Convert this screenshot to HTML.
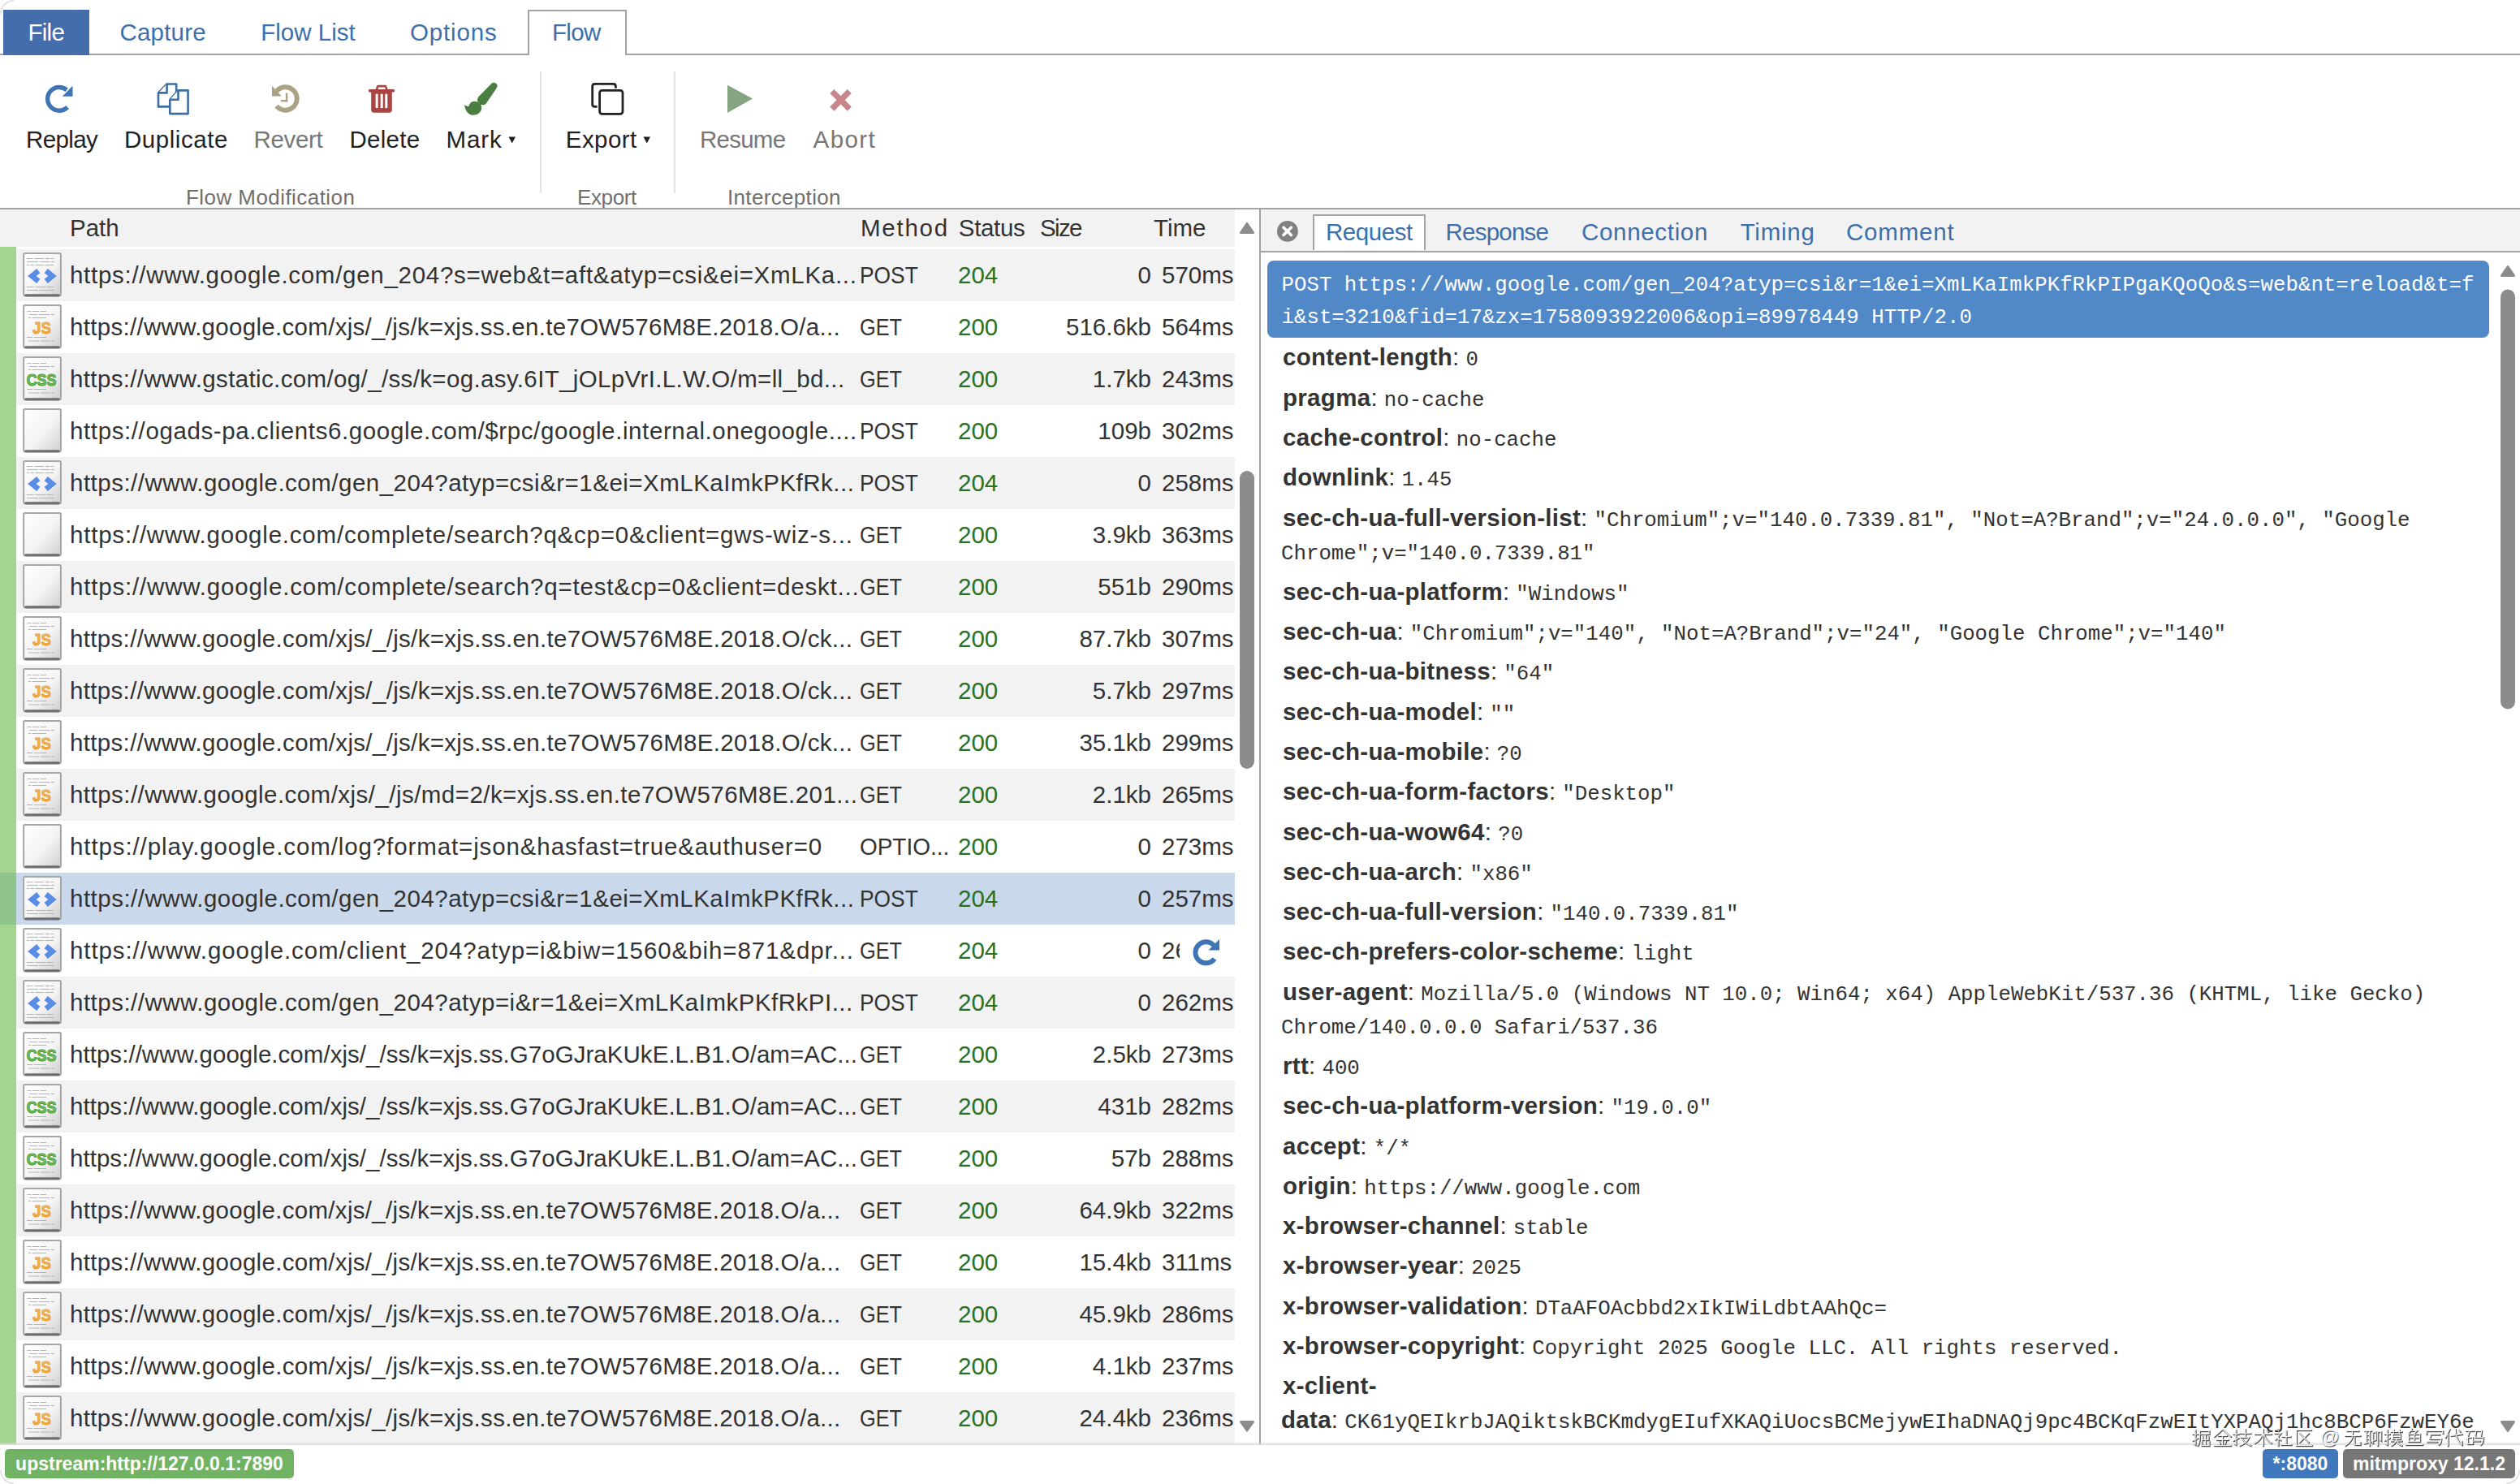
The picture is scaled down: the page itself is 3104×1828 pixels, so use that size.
<!DOCTYPE html>
<html><head><meta charset="utf-8"><title>mitmproxy</title><style>
*{box-sizing:border-box;margin:0;padding:0}
html,body{width:3104px;height:1828px;overflow:hidden;background:#fff;font-family:"Liberation Sans",sans-serif;color:#333;}
.a{position:absolute;white-space:nowrap}
.t{font-size:29.5px}
.m{font-family:"Liberation Mono",monospace;font-size:25.78px}
.menu{color:#3d6fab;font-size:29.5px;line-height:56px;top:12px}
.lbl{font-size:29.5px;line-height:40px;top:152px;color:#222}
.dis{color:#777}
.grp{font-size:26px;line-height:30px;top:227.6px;color:#6f6f6f}
.sep{position:absolute;top:88px;height:150px;width:2px;background:#e3e3e3}
.row{position:absolute;white-space:nowrap;left:0;width:1521px;height:64px;font-size:29.5px;line-height:64px;color:#333}
.row.odd{background:#f2f2f2}
.row.sel{background:#c9d8ea}
.row .g{position:absolute;left:0;top:0;width:20px;height:64px;background:#a3d490}
.row.sel .g{background:#8fc48d}
.row .ic{position:absolute;left:28px;top:4px;width:48px;height:56px}
.row .p{position:absolute;left:86px;width:970px;overflow:hidden;letter-spacing:0.9px}
.row .me{position:absolute;left:1059px;width:130px;overflow:hidden}
.row .st{position:absolute;left:1180px;color:#2a7020}
.row .sz{position:absolute;right:103px;text-align:right}
.row .tm{position:absolute;left:1431px;width:88px;overflow:hidden}
.hdr{font-size:29.5px;line-height:46px;top:258px;color:#333}
.dtab{font-size:29.5px;line-height:46px;top:262.5px;color:#3d6fab}
.kv{position:absolute;left:1580px;font-size:29.5px;color:#333;white-space:nowrap}
.kv b{font-weight:bold;letter-spacing:0.3px}
.kv .m{color:#333}
.badge{position:absolute;top:1785px;height:36px;border-radius:5px;color:#fff;font-weight:bold;font-size:23px;line-height:36px;text-align:center}
</style></head><body>
<div class="a" style="left:0;top:66px;width:3104px;height:2px;background:#a3a3a3"></div>
<div class="a" style="left:4px;top:12px;width:106px;height:56px;background:#446eab;color:#fff;font-size:29.5px;line-height:56px;text-align:center;letter-spacing:-0.71px;text-indent:-0.5px">File</div>
<div class="a menu" style="left:147.4px;letter-spacing:0.23px">Capture</div>
<div class="a menu" style="left:321.3px">Flow List</div>
<div class="a menu" style="left:505px;letter-spacing:0.85px">Options</div>
<div class="a" style="left:650px;top:12px;width:122px;height:56px;border:2px solid #a3a3a3;border-bottom:none;background:#fff"></div>
<div class="a menu" style="left:680px;letter-spacing:-0.66px">Flow</div>

<svg class="a" style="left:0;top:0" width="1100" height="258" viewBox="0 0 1100 258">
 <!-- replay -->
 <path d="M82.17 110.86 A14.35 14.35 0 1 0 83.1 132.0" fill="none" stroke="#3f74b5" stroke-width="5.4"/>
 <path d="M89.5 105.8 L89.5 118.7 L76.8 118.7 Z" fill="#3f74b5"/>
 <!-- duplicate -->
 <g fill="#fff" stroke="#3e6e9c" stroke-width="2.6" stroke-linejoin="round">
  <path d="M195 114.4 L205.6 103.5 L217.2 103.5 L217.2 131.4 L195 131.4 Z"/>
  <path d="M195 114.4 L205.6 114.4 L205.6 103.5"/>
  <path d="M209.3 122.8 L219.5 111.4 L231.6 111.4 L231.6 140.1 L209.3 140.1 Z"/>
  <path d="M209.3 122.8 L219.5 122.8 L219.5 111.4"/>
 </g>
 <!-- revert (history) -->
 <path d="M340.6 112.3 A14.25 14.25 0 1 1 340.6 130.7" fill="none" stroke="#aba283" stroke-width="5.9"/>
 <path d="M335 105.8 L335 118.6 L347 118.6 Z" fill="#aba283"/>
 <rect x="351.9" y="114.6" width="2.4" height="10.8" fill="#aba283"/><rect x="345.9" y="123" width="8.4" height="2.4" fill="#aba283"/>
 <!-- delete (trash) -->
 <g fill="#a94442">
  <path d="M462.6 110.6 L464 106 Q464.5 104.7 466 104.7 L474.3 104.7 Q475.8 104.7 476.3 106 L477.7 110.6 L474.9 110.6 L474.2 107.6 L466.1 107.6 L465.4 110.6 Z"/>
  <rect x="454" y="110.1" width="32" height="3.3" rx="1.2"/>
  <path d="M457.2 113 L482.8 113 L482.8 135.3 Q482.8 138.7 479.4 138.7 L460.6 138.7 Q457.2 138.7 457.2 135.3 Z"/>
 </g>
 <g fill="#fff"><rect x="462.6" y="115.7" width="3" height="17.4"/><rect x="468.7" y="115.7" width="3" height="17.4"/><rect x="474.3" y="115.7" width="3" height="17.4"/></g>
 <!-- mark (paint brush) -->
 <g fill="#4b7f41">
  <path d="M605.3 103.1 A4.2 4.2 0 0 1 611.7 108.5 L598.8 127.4 A6.2 6.2 0 0 1 589.2 119.6 Z"/>
  <path d="M572 128.9 C573 137 577.5 141.8 583 141.8 C589 141.8 593.2 137.5 593.2 132.8 C593.2 128 589 124.8 584.5 124.8 C580 124.8 578 128 577.5 131 C576 131 573.5 130.2 572 128.9 Z"/>
 </g>
 <path d="M626.5 168.5 L635 168.5 L630.75 176.5 Z" fill="#222"/>
 <!-- export (clone) -->
 <g fill="none" stroke="#222" stroke-width="2.8">
  <path d="M735.6 131.4 L732.7 131.4 Q729.7 131.4 729.7 128.4 L729.7 106.4 Q729.7 103.4 732.7 103.4 L755.4 103.4 Q758.4 103.4 758.4 106.4 L758.4 108.7"/>
  <rect x="738.6" y="111.4" width="28.4" height="28.9" rx="3"/>
 </g>
 <path d="M792.5 168.5 L801 168.5 L796.75 176.5 Z" fill="#222"/>
 <!-- resume -->
 <path d="M896 104.7 L927 121.6 L896 138.9 Z" fill="#85a582"/>
 <!-- abort -->
 <g stroke="#c6868c" stroke-width="7.2" stroke-linecap="butt">
  <path d="M1024.8 112.5 L1046.3 134.1 M1046.3 112.5 L1024.8 134.1"/>
 </g>
</svg>
<div class="a lbl" style="left:32px;letter-spacing:-0.62px">Replay</div>
<div class="a lbl" style="left:153px;letter-spacing:0.55px">Duplicate</div>
<div class="a lbl dis" style="left:312.6px;letter-spacing:-0.34px">Revert</div>
<div class="a lbl" style="left:430.5px;letter-spacing:0.27px">Delete</div>
<div class="a lbl" style="left:549.6px;letter-spacing:0.87px">Mark</div>
<div class="a lbl" style="left:696.8px;letter-spacing:0.43px">Export</div>
<div class="a lbl dis" style="left:862px;letter-spacing:-0.75px">Resume</div>
<div class="a lbl dis" style="left:1001.5px;letter-spacing:1.45px">Abort</div>
<div class="a grp" style="left:229px;letter-spacing:0.44px">Flow Modification</div>
<div class="a grp" style="left:711px;letter-spacing:-0.38px">Export</div>
<div class="a grp" style="left:896px;letter-spacing:0.33px">Interception</div>
<div class="sep" style="left:665px"></div>
<div class="sep" style="left:830px"></div>
<div class="a" style="left:0;top:256px;width:3104px;height:2px;background:#a3a3a3"></div>
<div class="a" style="left:0;top:258px;width:1521px;height:46px;background:#f2f2f2"></div>
<div class="a hdr" style="left:86px">Path</div>
<div class="a hdr" style="left:1060px;letter-spacing:1.74px">Method</div>
<div class="a hdr" style="left:1180.8px;letter-spacing:-0.34px">Status</div>
<div class="a hdr" style="left:1281px;letter-spacing:-1.66px">Size</div>
<div class="a hdr" style="left:1421px">Time</div>

<svg width="0" height="0" style="position:absolute">
 <defs>
  <linearGradient id="dg" x1="0" y1="0" x2="1" y2="1">
   <stop offset="0" stop-color="#ffffff"/><stop offset="0.55" stop-color="#f4f4f4"/><stop offset="1" stop-color="#cfcfcf"/>
  </linearGradient>
  <linearGradient id="jsg" x1="0" y1="0" x2="0" y2="1"><stop offset="0" stop-color="#f7c46a"/><stop offset="1" stop-color="#eea43a"/></linearGradient>
  <g id="doc">
   <rect x="1.1" y="1.1" width="45.8" height="51.8" rx="1.5" fill="url(#dg)" stroke="#a6a6a6" stroke-width="2"/>
   <rect x="2.2" y="51.2" width="43.6" height="3.4" rx="1.5" fill="#6e6e6e"/>
  </g>
  <g id="lines" fill="none" stroke="#b4b4b4" stroke-width="1.1">
   <path d="M5 8.5H10M11.5 8.5H20M21.5 8.5H29" /><path d="M8 12.5H18M19.5 12.5H33M34.5 12.5H39"/><path d="M7 16.5H10M11.5 16.5H29"/>
   <path d="M5 40.5H12M13.5 40.5H29"/><path d="M7 45H20M21.5 45H33M34.5 45H39"/>
  </g>
  <g id="i-html"><use href="#doc"/>
   <g fill="none" stroke="#b4b4b4" stroke-width="1.1"><path d="M5 7.5H12M13.5 7.5H26M27.5 7.5H33M34.5 7.5H38"/><path d="M5 11.5H19M20.5 11.5H33M34.5 11.5H39"/><path d="M5 15.5H8M9.5 15.5H14M15.5 15.5H26M27.5 15.5H38"/><path d="M5 42.5H14M15.5 42.5H28M29.5 42.5H38"/><path d="M5 46.5H19M20.5 46.5H38"/></g>
   <path d="M19.3 22.6 L11.4 29 L19.3 35.4" fill="none" stroke="#5b8de6" stroke-width="6.6" stroke-linecap="butt" stroke-linejoin="miter" stroke-miterlimit="8"/>
   <path d="M28.7 22.6 L36.6 29 L28.7 35.4" fill="none" stroke="#5b8de6" stroke-width="6.6" stroke-linecap="butt" stroke-linejoin="miter" stroke-miterlimit="8"/>
  </g>
  <g id="i-js"><use href="#doc"/><use href="#lines"/>
   <text x="23.5" y="36" text-anchor="middle" font-family="Liberation Sans" font-weight="bold" font-size="21" fill="url(#jsg)" stroke="#e9a03c" stroke-width="0.9" textLength="23" lengthAdjust="spacingAndGlyphs">JS</text>
  </g>
  <g id="i-css"><use href="#doc"/><use href="#lines"/>
   <text x="23" y="36" text-anchor="middle" font-family="Liberation Sans" font-weight="bold" font-size="19.5" fill="#7cc262" stroke="#4f9e38" stroke-width="1.1" textLength="36.4" lengthAdjust="spacingAndGlyphs">CSS</text>
  </g>
  <g id="i-blank"><use href="#doc"/></g>
 </defs>
</svg>
<div class="row odd" style="top:307px"><div class="g"></div><svg class="ic" viewBox="0 0 48 56"><use href="#i-html"/></svg><div class="p" style="letter-spacing:0.71px">https://www.google.com/gen_204?s=web&amp;t=aft&amp;atyp=csi&amp;ei=XmLKa...</div><div class="me" style="transform:scaleX(0.894);transform-origin:0 0">POST</div><div class="st">204</div><div class="sz">0</div><div class="tm">570ms</div></div>
<div class="row" style="top:371px"><div class="g"></div><svg class="ic" viewBox="0 0 48 56"><use href="#i-js"/></svg><div class="p" style="letter-spacing:0.3px">https://www.google.com/xjs/_/js/k=xjs.ss.en.te7OW576M8E.2018.O/a...</div><div class="me" style="transform:scaleX(0.856);transform-origin:0 0">GET</div><div class="st">200</div><div class="sz">516.6kb</div><div class="tm">564ms</div></div>
<div class="row odd" style="top:435px"><div class="g"></div><svg class="ic" viewBox="0 0 48 56"><use href="#i-css"/></svg><div class="p" style="letter-spacing:0.36px">https://www.gstatic.com/og/_/ss/k=og.asy.6IT_jOLpVrI.L.W.O/m=ll_bd...</div><div class="me" style="transform:scaleX(0.856);transform-origin:0 0">GET</div><div class="st">200</div><div class="sz">1.7kb</div><div class="tm">243ms</div></div>
<div class="row" style="top:499px"><div class="g"></div><svg class="ic" viewBox="0 0 48 56"><use href="#i-blank"/></svg><div class="p" style="letter-spacing:0.61px">https://ogads-pa.clients6.google.com/$rpc/google.internal.onegoogle....</div><div class="me" style="transform:scaleX(0.894);transform-origin:0 0">POST</div><div class="st">200</div><div class="sz">109b</div><div class="tm">302ms</div></div>
<div class="row odd" style="top:563px"><div class="g"></div><svg class="ic" viewBox="0 0 48 56"><use href="#i-html"/></svg><div class="p" style="letter-spacing:0.49px">https://www.google.com/gen_204?atyp=csi&amp;r=1&amp;ei=XmLKaImkPKfRk...</div><div class="me" style="transform:scaleX(0.894);transform-origin:0 0">POST</div><div class="st">204</div><div class="sz">0</div><div class="tm">258ms</div></div>
<div class="row" style="top:627px"><div class="g"></div><svg class="ic" viewBox="0 0 48 56"><use href="#i-blank"/></svg><div class="p" style="letter-spacing:0.79px">https://www.google.com/complete/search?q&amp;cp=0&amp;client=gws-wiz-s...</div><div class="me" style="transform:scaleX(0.856);transform-origin:0 0">GET</div><div class="st">200</div><div class="sz">3.9kb</div><div class="tm">363ms</div></div>
<div class="row odd" style="top:691px"><div class="g"></div><svg class="ic" viewBox="0 0 48 56"><use href="#i-blank"/></svg><div class="p" style="letter-spacing:0.81px">https://www.google.com/complete/search?q=test&amp;cp=0&amp;client=deskt...</div><div class="me" style="transform:scaleX(0.856);transform-origin:0 0">GET</div><div class="st">200</div><div class="sz">551b</div><div class="tm">290ms</div></div>
<div class="row" style="top:755px"><div class="g"></div><svg class="ic" viewBox="0 0 48 56"><use href="#i-js"/></svg><div class="p" style="letter-spacing:0.33px">https://www.google.com/xjs/_/js/k=xjs.ss.en.te7OW576M8E.2018.O/ck...</div><div class="me" style="transform:scaleX(0.856);transform-origin:0 0">GET</div><div class="st">200</div><div class="sz">87.7kb</div><div class="tm">307ms</div></div>
<div class="row odd" style="top:819px"><div class="g"></div><svg class="ic" viewBox="0 0 48 56"><use href="#i-js"/></svg><div class="p" style="letter-spacing:0.33px">https://www.google.com/xjs/_/js/k=xjs.ss.en.te7OW576M8E.2018.O/ck...</div><div class="me" style="transform:scaleX(0.856);transform-origin:0 0">GET</div><div class="st">200</div><div class="sz">5.7kb</div><div class="tm">297ms</div></div>
<div class="row" style="top:883px"><div class="g"></div><svg class="ic" viewBox="0 0 48 56"><use href="#i-js"/></svg><div class="p" style="letter-spacing:0.33px">https://www.google.com/xjs/_/js/k=xjs.ss.en.te7OW576M8E.2018.O/ck...</div><div class="me" style="transform:scaleX(0.856);transform-origin:0 0">GET</div><div class="st">200</div><div class="sz">35.1kb</div><div class="tm">299ms</div></div>
<div class="row odd" style="top:947px"><div class="g"></div><svg class="ic" viewBox="0 0 48 56"><use href="#i-js"/></svg><div class="p" style="letter-spacing:0.46px">https://www.google.com/xjs/_/js/md=2/k=xjs.ss.en.te7OW576M8E.201...</div><div class="me" style="transform:scaleX(0.856);transform-origin:0 0">GET</div><div class="st">200</div><div class="sz">2.1kb</div><div class="tm">265ms</div></div>
<div class="row" style="top:1011px"><div class="g"></div><svg class="ic" viewBox="0 0 48 56"><use href="#i-blank"/></svg><div class="p" style="letter-spacing:0.89px">https://play.google.com/log?format=json&amp;hasfast=true&amp;authuser=0</div><div class="me" style="transform:scaleX(0.947);transform-origin:0 0">OPTIO...</div><div class="st">200</div><div class="sz">0</div><div class="tm">273ms</div></div>
<div class="row sel" style="top:1075px"><div class="g"></div><svg class="ic" viewBox="0 0 48 56"><use href="#i-html"/></svg><div class="p" style="letter-spacing:0.49px">https://www.google.com/gen_204?atyp=csi&amp;r=1&amp;ei=XmLKaImkPKfRk...</div><div class="me" style="transform:scaleX(0.894);transform-origin:0 0">POST</div><div class="st">204</div><div class="sz">0</div><div class="tm">257ms</div></div>
<div class="row" style="top:1139px"><div class="g"></div><svg class="ic" viewBox="0 0 48 56"><use href="#i-html"/></svg><div class="p" style="letter-spacing:0.91px">https://www.google.com/client_204?atyp=i&amp;biw=1560&amp;bih=871&amp;dpr...</div><div class="me" style="transform:scaleX(0.856);transform-origin:0 0">GET</div><div class="st">204</div><div class="sz">0</div><div class="tm" style="width:22px">26</div><svg class="a" style="left:1467px;top:16px" width="36" height="36" viewBox="0 0 36 36"><path d="M28 9.5 A13 13 0 1 0 29 26" fill="none" stroke="#3f74b5" stroke-width="6"/><path d="M35 2 L35 15.5 L21.5 15.5 Z" fill="#3f74b5"/></svg></div>
<div class="row odd" style="top:1203px"><div class="g"></div><svg class="ic" viewBox="0 0 48 56"><use href="#i-html"/></svg><div class="p" style="letter-spacing:0.49px">https://www.google.com/gen_204?atyp=i&amp;r=1&amp;ei=XmLKaImkPKfRkPI...</div><div class="me" style="transform:scaleX(0.894);transform-origin:0 0">POST</div><div class="st">204</div><div class="sz">0</div><div class="tm">262ms</div></div>
<div class="row" style="top:1267px"><div class="g"></div><svg class="ic" viewBox="0 0 48 56"><use href="#i-css"/></svg><div class="p" style="letter-spacing:0.04px">https://www.google.com/xjs/_/ss/k=xjs.ss.G7oGJraKUkE.L.B1.O/am=AC...</div><div class="me" style="transform:scaleX(0.856);transform-origin:0 0">GET</div><div class="st">200</div><div class="sz">2.5kb</div><div class="tm">273ms</div></div>
<div class="row odd" style="top:1331px"><div class="g"></div><svg class="ic" viewBox="0 0 48 56"><use href="#i-css"/></svg><div class="p" style="letter-spacing:0.04px">https://www.google.com/xjs/_/ss/k=xjs.ss.G7oGJraKUkE.L.B1.O/am=AC...</div><div class="me" style="transform:scaleX(0.856);transform-origin:0 0">GET</div><div class="st">200</div><div class="sz">431b</div><div class="tm">282ms</div></div>
<div class="row" style="top:1395px"><div class="g"></div><svg class="ic" viewBox="0 0 48 56"><use href="#i-css"/></svg><div class="p" style="letter-spacing:0.04px">https://www.google.com/xjs/_/ss/k=xjs.ss.G7oGJraKUkE.L.B1.O/am=AC...</div><div class="me" style="transform:scaleX(0.856);transform-origin:0 0">GET</div><div class="st">200</div><div class="sz">57b</div><div class="tm">288ms</div></div>
<div class="row odd" style="top:1459px"><div class="g"></div><svg class="ic" viewBox="0 0 48 56"><use href="#i-js"/></svg><div class="p" style="letter-spacing:0.31px">https://www.google.com/xjs/_/js/k=xjs.ss.en.te7OW576M8E.2018.O/a...</div><div class="me" style="transform:scaleX(0.856);transform-origin:0 0">GET</div><div class="st">200</div><div class="sz">64.9kb</div><div class="tm">322ms</div></div>
<div class="row" style="top:1523px"><div class="g"></div><svg class="ic" viewBox="0 0 48 56"><use href="#i-js"/></svg><div class="p" style="letter-spacing:0.31px">https://www.google.com/xjs/_/js/k=xjs.ss.en.te7OW576M8E.2018.O/a...</div><div class="me" style="transform:scaleX(0.856);transform-origin:0 0">GET</div><div class="st">200</div><div class="sz">15.4kb</div><div class="tm">311ms</div></div>
<div class="row odd" style="top:1587px"><div class="g"></div><svg class="ic" viewBox="0 0 48 56"><use href="#i-js"/></svg><div class="p" style="letter-spacing:0.31px">https://www.google.com/xjs/_/js/k=xjs.ss.en.te7OW576M8E.2018.O/a...</div><div class="me" style="transform:scaleX(0.856);transform-origin:0 0">GET</div><div class="st">200</div><div class="sz">45.9kb</div><div class="tm">286ms</div></div>
<div class="row" style="top:1651px"><div class="g"></div><svg class="ic" viewBox="0 0 48 56"><use href="#i-js"/></svg><div class="p" style="letter-spacing:0.31px">https://www.google.com/xjs/_/js/k=xjs.ss.en.te7OW576M8E.2018.O/a...</div><div class="me" style="transform:scaleX(0.856);transform-origin:0 0">GET</div><div class="st">200</div><div class="sz">4.1kb</div><div class="tm">237ms</div></div>
<div class="row odd" style="top:1715px"><div class="g"></div><svg class="ic" viewBox="0 0 48 56"><use href="#i-js"/></svg><div class="p" style="letter-spacing:0.31px">https://www.google.com/xjs/_/js/k=xjs.ss.en.te7OW576M8E.2018.O/a...</div><div class="me" style="transform:scaleX(0.856);transform-origin:0 0">GET</div><div class="st">200</div><div class="sz">24.4kb</div><div class="tm">236ms</div></div>
<div class="a" style="left:0;top:304px;width:20px;height:3px;background:#a3d490"></div>
<svg class="a" style="left:1521px;top:258px" width="30" height="1522" viewBox="0 0 30 1522"><path d="M7.5 28.5 L22.5 28.5 L15 17.5 Z" fill="#8c8c8c" stroke="#8c8c8c" stroke-width="3" stroke-linejoin="round"/><rect x="6" y="322" width="18" height="367" rx="9" fill="#8c8c8c"/><path d="M7.5 1493.5 L22.5 1493.5 L15 1504 Z" fill="#8c8c8c" stroke="#8c8c8c" stroke-width="3" stroke-linejoin="round"/></svg>
<div class="a" style="left:1551px;top:258px;width:2px;height:1522px;background:#a3a3a3"></div>
<div class="a" style="left:1553px;top:258px;width:1551px;height:51px;background:#f2f2f2"></div>
<svg class="a" style="left:1572px;top:271px" width="28" height="28" viewBox="0 0 28 28"><circle cx="13.9" cy="13.9" r="12.9" fill="#808080"/><path d="M9 9.2 L18.4 18.6 M18.4 9.2 L9 18.6" stroke="#fff" stroke-width="3.6" stroke-linecap="round"/></svg>
<div class="a" style="left:1617px;top:264px;width:139px;height:44px;border:2px solid #a3a3a3;border-bottom:none;background:#fff"></div>
<div class="a" style="left:1553px;top:309px;width:1551px;height:2px;background:#a3a3a3"></div>
<div class="a dtab" style="left:1633px;letter-spacing:-0.45px">Request</div>
<div class="a dtab" style="left:1780.5px;letter-spacing:-0.76px">Response</div>
<div class="a dtab" style="left:1948px;letter-spacing:0.68px">Connection</div>
<div class="a dtab" style="left:2143.7px;letter-spacing:0.76px">Timing</div>
<div class="a dtab" style="left:2274px;letter-spacing:0.8px">Comment</div>
<div class="a" style="left:1561px;top:321px;width:1505px;height:95px;border-radius:8px;background:#5088c8"></div>
<div class="a m" style="left:1578.5px;top:332.2px;color:#fff;line-height:39.4px">POST https://www.google.com/gen_204?atyp=csi&amp;r=1&amp;ei=XmLKaImkPKfRkPIPgaKQoQo&amp;s=web&amp;nt=reload&amp;t=f<br>i&amp;st=3210&amp;fid=17&amp;zx=1758093922006&amp;opi=89978449 HTTP/2.0</div>
<div class="kv" style="top:419.3px;line-height:41.9px"><b>content-length</b>: <span class="m">0</span></div>
<div class="kv" style="top:468.6px;line-height:41.9px"><b>pragma</b>: <span class="m">no-cache</span></div>
<div class="kv" style="top:517.9px;line-height:41.9px"><b>cache-control</b>: <span class="m">no-cache</span></div>
<div class="kv" style="top:567.2px;line-height:41.9px"><b>downlink</b>: <span class="m">1.45</span></div>
<div class="kv" style="top:616.5px;line-height:41.9px"><b>sec-ch-ua-full-version-list</b>: <span class="m">"Chromium";v="140.0.7339.81", "Not=A?Brand";v="24.0.0.0", "Google</span></div>
<div class="kv m" style="top:661.8px;line-height:41.9px;left:1578px;font-size:25.78px">Chrome";v="140.0.7339.81"</div>
<div class="kv" style="top:707.7px;line-height:41.9px"><b>sec-ch-ua-platform</b>: <span class="m">"Windows"</span></div>
<div class="kv" style="top:757.0px;line-height:41.9px"><b>sec-ch-ua</b>: <span class="m">"Chromium";v="140", "Not=A?Brand";v="24", "Google Chrome";v="140"</span></div>
<div class="kv" style="top:806.3px;line-height:41.9px"><b>sec-ch-ua-bitness</b>: <span class="m">"64"</span></div>
<div class="kv" style="top:855.6px;line-height:41.9px"><b>sec-ch-ua-model</b>: <span class="m">""</span></div>
<div class="kv" style="top:904.9px;line-height:41.9px"><b>sec-ch-ua-mobile</b>: <span class="m">?0</span></div>
<div class="kv" style="top:954.2px;line-height:41.9px"><b>sec-ch-ua-form-factors</b>: <span class="m">"Desktop"</span></div>
<div class="kv" style="top:1003.5px;line-height:41.9px"><b>sec-ch-ua-wow64</b>: <span class="m">?0</span></div>
<div class="kv" style="top:1052.8px;line-height:41.9px"><b>sec-ch-ua-arch</b>: <span class="m">"x86"</span></div>
<div class="kv" style="top:1102.1px;line-height:41.9px"><b>sec-ch-ua-full-version</b>: <span class="m">"140.0.7339.81"</span></div>
<div class="kv" style="top:1151.4px;line-height:41.9px"><b>sec-ch-prefers-color-scheme</b>: <span class="m">light</span></div>
<div class="kv" style="top:1200.7px;line-height:41.9px"><b>user-agent</b>: <span class="m">Mozilla/5.0 (Windows NT 10.0; Win64; x64) AppleWebKit/537.36 (KHTML, like Gecko)</span></div>
<div class="kv m" style="top:1246.0px;line-height:41.9px;left:1578px;font-size:25.78px">Chrome/140.0.0.0 Safari/537.36</div>
<div class="kv" style="top:1291.9px;line-height:41.9px"><b>rtt</b>: <span class="m">400</span></div>
<div class="kv" style="top:1341.2px;line-height:41.9px"><b>sec-ch-ua-platform-version</b>: <span class="m">"19.0.0"</span></div>
<div class="kv" style="top:1390.5px;line-height:41.9px"><b>accept</b>: <span class="m">*/*</span></div>
<div class="kv" style="top:1439.8px;line-height:41.9px"><b>origin</b>: <span class="m">https://www.google.com</span></div>
<div class="kv" style="top:1489.1px;line-height:41.9px"><b>x-browser-channel</b>: <span class="m">stable</span></div>
<div class="kv" style="top:1538.4px;line-height:41.9px"><b>x-browser-year</b>: <span class="m">2025</span></div>
<div class="kv" style="top:1587.7px;line-height:41.9px"><b>x-browser-validation</b>: <span class="m">DTaAFOAcbbd2xIkIWiLdbtAAhQc=</span></div>
<div class="kv" style="top:1637.0px;line-height:41.9px"><b>x-browser-copyright</b>: <span class="m">Copyright 2025 Google LLC. All rights reserved.</span></div>
<div class="kv" style="top:1686.3px;line-height:41.9px"><b>x-client-</b></div>
<div class="kv" style="top:1728.2px;line-height:41.9px;left:1578px"><b>data</b>: <span class="m">CK61yQEIkrbJAQiktskBCKmdygEIufXKAQiUocsBCMejywEIhaDNAQj9pc4BCKqFzwEItYXPAQj1hc8BCP6FzwEY6e</span></div>
<svg class="a" style="left:3074px;top:311px" width="30" height="1469" viewBox="0 0 30 1469"><path d="M7.5 28.5 L22.5 28.5 L15 17.5 Z" fill="#8c8c8c" stroke="#8c8c8c" stroke-width="3" stroke-linejoin="round"/><rect x="6" y="45.5" width="18" height="517" rx="9" fill="#8c8c8c"/><path d="M7.5 1440.5 L22.5 1440.5 L15 1451.5 Z" fill="#8c8c8c" stroke="#8c8c8c" stroke-width="3" stroke-linejoin="round"/></svg>
<div class="a" style="left:0;top:1776px;width:3104px;height:4px;background:linear-gradient(#ffffff00,#d9d9d9)"></div>
<div class="a" style="left:0;top:1780px;width:3104px;height:48px;background:#fff"></div>
<div class="badge" style="left:6px;width:356px;background:#70b463">upstream:http://127.0.0.1:7890</div>
<div class="badge" style="left:2787px;width:93px;background:#3f78bd">*:8080</div>
<div class="badge" style="left:2886px;width:212px;background:#777">mitmproxy 12.1.2</div>
<svg class="a" style="left:2695px;top:1755px" width="380" height="32" viewBox="2695 1755 380 32"><g fill="none" stroke="#4d4d4d" stroke-width="2" stroke-linecap="square"><path transform="translate(2701.7 1760.2)" d="M0 7L6 7M3 2L3 20L1.5 19M0 15L6 12M8 3L20 3L20 7L9 7M8.5 3L8.2 14Q7.5 19 6 21M12 10L12 14L19 14L19 10M15.5 8.5L15.5 20M11 16L11 21L20 21L20 16"/><path transform="translate(2727.2 1760.2)" d="M11 1L1 10M11 1L21 10M6 9L16 9M4 14L18 14M11 9L11 21M7 16L8 19M15 16L14 19M1 21L21 21"/><path transform="translate(2751.7 1760.2)" d="M0 7L6 7M3 2L3 20L1.5 19M0 15L6 12M8 6L21 6M14.5 1L14.5 10M9 11L19 11Q16 18 8 21M11 13Q15 19 21 21"/><path transform="translate(2777.2 1760.2)" d="M1 7L21 7M11 1L11 21M10 8Q7 15 1 18M12 8Q15 15 21 18M15.5 2L17 4"/><path transform="translate(2801.7 1760.2)" d="M4 1L5.5 3M1 6L8 6L2 14M5 10L5 21M5 12L8 14.5M10 10L20 10M15 3L15 20M9 20L21 20"/><path transform="translate(2827.2 1760.2)" d="M20 2L2 2L2 21L21 21M6 6L17 17M17 6L6 17"/><path transform="translate(2887.7 1760.2)" d="M4 3L18 3M2 9L20 9M10.5 3.5L10.5 10Q9 16 2 21M13 9L13 18Q13 20 15 20L20 20L20 17"/><path transform="translate(2912.3999999999996 1760.2)" d="M1 3L9 3M3 3L3 18M7 3L7 21M3 8L7 8M3 13L7 13M1 18.5L9 16.5M11 5L15 4L15 14L11 15M11 4.5L11 18M17 4L21 4L21 15L19.5 14M17 4L17 21"/><path transform="translate(2938.0 1760.2)" d="M0 7L6 7M3 2L3 20L1.5 19M0 15L6 12M8 4L21 4M11 2L11 6M18 2L18 6M10 7L19 7L19 13L10 13Z M10 10L19 10M8 15.5L21 15.5M14.5 13.5Q13 19 8.5 21M15 16Q17 20 21 21"/><path transform="translate(2963.2999999999997 1760.2)" d="M8 1L4 6M7 3L14 3L11 6M4 7L18 7L18 16L4 16Z M11 7L11 16M4 11.5L18 11.5M1 20L21 20"/><path transform="translate(2988.5 1760.2)" d="M1 7L1 3L21 3L21 6M6 7.5L17 7.5M6 7.5L5 13M5 13L19 13Q19 18 16 20M2 16.5L14 16.5"/><path transform="translate(3011.8999999999996 1760.2)" d="M6 1L1 11M4 7L4 21M8 9L21 7M13 1Q13.5 14 21 20L21 16M17 2L19 4"/><path transform="translate(3038.2999999999997 1760.2)" d="M0 3L8 3M4 3L1 13M2 11L8 11L8 19L2 19Z M10 3L19 3L18 10M12 3L11 11M11 11L21 11Q21 18 18 20M9 15.5L17 15.5"/></g><g fill="none" stroke="#f2f2f2" stroke-width="1.2" stroke-linecap="square"><path transform="translate(2701 1759.5)" d="M0 7L6 7M3 2L3 20L1.5 19M0 15L6 12M8 3L20 3L20 7L9 7M8.5 3L8.2 14Q7.5 19 6 21M12 10L12 14L19 14L19 10M15.5 8.5L15.5 20M11 16L11 21L20 21L20 16"/><path transform="translate(2726.5 1759.5)" d="M11 1L1 10M11 1L21 10M6 9L16 9M4 14L18 14M11 9L11 21M7 16L8 19M15 16L14 19M1 21L21 21"/><path transform="translate(2751 1759.5)" d="M0 7L6 7M3 2L3 20L1.5 19M0 15L6 12M8 6L21 6M14.5 1L14.5 10M9 11L19 11Q16 18 8 21M11 13Q15 19 21 21"/><path transform="translate(2776.5 1759.5)" d="M1 7L21 7M11 1L11 21M10 8Q7 15 1 18M12 8Q15 15 21 18M15.5 2L17 4"/><path transform="translate(2801 1759.5)" d="M4 1L5.5 3M1 6L8 6L2 14M5 10L5 21M5 12L8 14.5M10 10L20 10M15 3L15 20M9 20L21 20"/><path transform="translate(2826.5 1759.5)" d="M20 2L2 2L2 21L21 21M6 6L17 17M17 6L6 17"/><path transform="translate(2887 1759.5)" d="M4 3L18 3M2 9L20 9M10.5 3.5L10.5 10Q9 16 2 21M13 9L13 18Q13 20 15 20L20 20L20 17"/><path transform="translate(2911.7 1759.5)" d="M1 3L9 3M3 3L3 18M7 3L7 21M3 8L7 8M3 13L7 13M1 18.5L9 16.5M11 5L15 4L15 14L11 15M11 4.5L11 18M17 4L21 4L21 15L19.5 14M17 4L17 21"/><path transform="translate(2937.3 1759.5)" d="M0 7L6 7M3 2L3 20L1.5 19M0 15L6 12M8 4L21 4M11 2L11 6M18 2L18 6M10 7L19 7L19 13L10 13Z M10 10L19 10M8 15.5L21 15.5M14.5 13.5Q13 19 8.5 21M15 16Q17 20 21 21"/><path transform="translate(2962.6 1759.5)" d="M8 1L4 6M7 3L14 3L11 6M4 7L18 7L18 16L4 16Z M11 7L11 16M4 11.5L18 11.5M1 20L21 20"/><path transform="translate(2987.8 1759.5)" d="M1 7L1 3L21 3L21 6M6 7.5L17 7.5M6 7.5L5 13M5 13L19 13Q19 18 16 20M2 16.5L14 16.5"/><path transform="translate(3011.2 1759.5)" d="M6 1L1 11M4 7L4 21M8 9L21 7M13 1Q13.5 14 21 20L21 16M17 2L19 4"/><path transform="translate(3037.6 1759.5)" d="M0 3L8 3M4 3L1 13M2 11L8 11L8 19L2 19Z M10 3L19 3L18 10M12 3L11 11M11 11L21 11Q21 18 18 20M9 15.5L17 15.5"/></g><text x="2858.2" y="1779" font-family="Liberation Sans" font-size="24" fill="#4d4d4d">@</text><text x="2857.5" y="1778.3" font-family="Liberation Sans" font-size="24" fill="#f2f2f2">@</text></svg>
<svg class="a" style="left:0;top:0" width="3104" height="1828" viewBox="0 0 3104 1828"><g fill="none" stroke="#dcdcdc" stroke-width="1.5"><path d="M0.8 17 A16.5 16.5 0 0 1 17 0.8"/><path d="M0.8 1811 A16.5 16.5 0 0 0 17 1827.2"/><path d="M3103.2 1811 A16.5 16.5 0 0 1 3087 1827.2"/></g></svg>
</body></html>
